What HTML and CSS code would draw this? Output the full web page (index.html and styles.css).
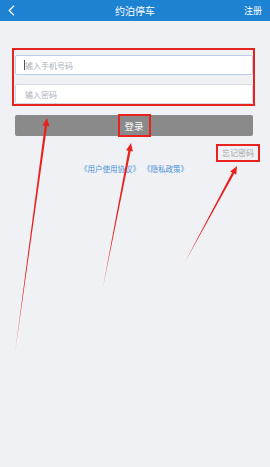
FILE: index.html
```html
<!DOCTYPE html>
<html lang="zh-CN">
<head>
  <meta charset="UTF-8" />
  <meta name="viewport" content="width=device-width, initial-scale=1" />
  <title>约泊停车</title>
  <link rel="stylesheet" href="styles.css">
</head>
<body>
  <header class="topbar">
    <span class="back">
      <svg width="7" height="11" viewBox="0 0 7 11"><polyline points="6,0.8 1.2,5.5 6,10.2" fill="none" stroke="#fff" stroke-width="1.2"/></svg>
    </span>
    <h1 class="title">约泊停车</h1>
    <span class="register">注册</span>
  </header>

  <main class="login">
    <div class="fields mark">
      <input class="field focused" type="text" placeholder="输入手机号码" />
      <input class="field" type="password" placeholder="输入密码" />
    </div>
    <button class="submit"><span class="mark">登录</span></button>
    <div class="forgot-row"><span class="forgot mark">忘记密码</span></div>
    <p class="terms"><span>《用户使用协议》</span><span>《隐私政策》</span></p>
  </main>

  <!-- annotation arrows -->
  <svg class="arrows" width="270" height="467" viewBox="0 0 270 467">
    <polygon points="47,118 49.4,126.4 47.1,126.1 15,353 44.7,125.7 42.4,125.4" />
    <polygon points="131,143 132.9,151.5 130.7,151.1 103,287 128.3,150.7 126.1,150.2" />
    <polygon points="237,166 236.3,174.7 234.3,173.6 185,262 232.1,172.4 230.1,171.4" />
  </svg>
</body>
</html>
```

FILE: styles.css
```css
* {
  box-sizing: border-box;
}
body {
  margin: 0;
  width: 270px;
  min-height: 467px;
  background: #f0f1f5;
  font-family: "Noto Sans CJK SC", "Noto Sans", sans-serif;
  position: relative;
}

.topbar {
  height: 21px;
  background: #1e82d2;
  display: grid;
  grid-template-columns: 1fr auto 1fr;
  align-items: center;
  padding: 0 8px;
  color: #fff;
}
.back {
  display: flex;
  align-items: center;
}
.title {
  margin: 0;
  font-size: 10px;
  font-weight: 400;
  line-height: 21px;
}
.register {
  justify-self: end;
  font-size: 9px;
}

.login {
  padding: 27px 17px 0 15px;
}

/* red annotation boxes */
.mark {
  border: 2px solid #e8231f;
}

.fields {
  margin: 0 -2px 0 -3px;
  padding: 5px 0 0 1px;
  display: flex;
  flex-direction: column;
  gap: 9px;
}
.field {
  height: 20px;
  width: 100%;
  border: 1px solid #d3d8e0;
  border-radius: 2px;
  background: #fff;
  padding: 0 9px;
  font-family: inherit;
  font-size: 8px;
  outline: none;
}
/* text cursor in the first field */
.field.focused {
  border-color: #b9cde6;
  background: linear-gradient(#555, #555) no-repeat 8px center / 1px 10px, #fff;
}
.field::placeholder {
  color: #aab0b8;
}

.submit {
  margin-top: 9px;
  width: 100%;
  height: 21px;
  border: none;
  border-radius: 2px;
  background: #8a8a8a;
  color: #fff;
  font-family: inherit;
  font-size: 9.5px;
  display: flex;
  align-items: center;
  justify-content: center;
  padding: 0;
}
.submit .mark {
  width: 33px;
  height: 23px;
  display: flex;
  align-items: center;
  justify-content: center;
}

.forgot-row {
  margin: 8px -7px 0 0;
  display: flex;
  justify-content: flex-end;
}
.forgot {
  height: 18px;
  padding: 0 4px;
  font-size: 8px;
  line-height: 14px;
  color: #a3a6ab;
}

.terms {
  margin: 1px 0 0;
  display: flex;
  justify-content: center;
  gap: 3px;
  font-size: 7.5px;
  color: #4b93d8;
}

.arrows {
  position: absolute;
  top: 0;
  left: 0;
  pointer-events: none;
  fill: #e8231f;
}
```
